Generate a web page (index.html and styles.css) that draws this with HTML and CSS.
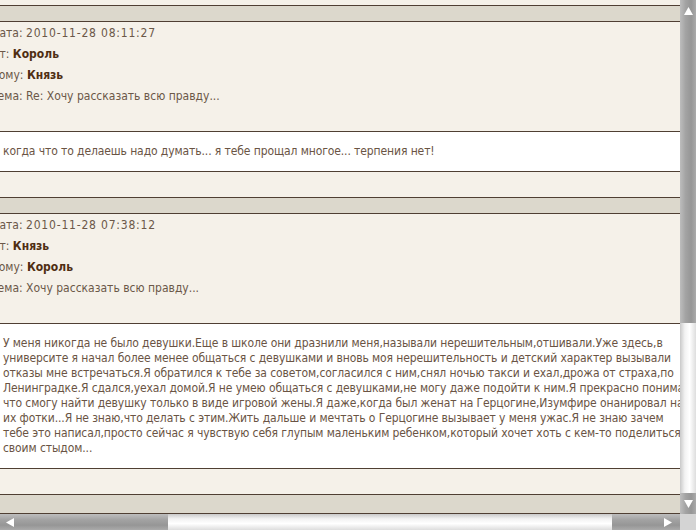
FILE: index.html
```html
<!DOCTYPE html>
<html lang="ru">
<head>
    <meta charset="UTF-8">
    <title>Личные сообщения</title>
    <link rel="stylesheet" href="styles.css">
</head>
<body>
    <div class="frame">
        <div class="viewport">
            <div class="page">
                <!-- Сообщение 1 -->
                <div class="post">
                    <div class="post-head"></div>
                    <div class="post-meta">
                        <div>Дата: <span class="date">2010-11-28 08:11:27</span></div>
                        <div>От: <b>Король</b></div>
                        <div>Кому: <b>Князь</b></div>
                        <div>Тема: Re: Хочу рассказать всю правду...</div>
                    </div>
                    <div class="post-text">когда что то делаешь надо думать... я тебе прощал многое... терпения нет!</div>
                </div>

                <!-- Сообщение 2 -->
                <div class="post">
                    <div class="post-head"></div>
                    <div class="post-meta">
                        <div>Дата: <span class="date">2010-11-28 07:38:12</span></div>
                        <div>От: <b>Князь</b></div>
                        <div>Кому: <b>Король</b></div>
                        <div>Тема: Хочу рассказать всю правду...</div>
                    </div>
                    <div class="post-text">У меня никогда не было девушки.Еще в школе они дразнили меня,называли нерешительным,отшивали.Уже здесь,в<br>университе я начал более менее общаться с девушками и вновь моя нерешительность и детский характер вызывали<br>отказы мне встречаться.Я обратился к тебе за советом,согласился с ним,снял ночью такси и ехал,дрожа от страха,по<br>Ленинградке.Я сдался,уехал домой.Я не умею общаться с девушками,не могу даже подойти к ним.Я прекрасно понимаю,<br>что смогу найти девушку только в виде игровой жены.Я даже,когда был женат на Герцогине,Изумфире онанировал на<br>их фотки...Я не знаю,что делать с этим.Жить дальше и мечтать о Герцогине вызывает у меня ужас.Я не знаю зачем<br>тебе это написал,просто сейчас я чувствую себя глупым маленьким ребенком,который хочет хоть с кем-то поделиться<br>своим стыдом...</div>
                </div>

                <div class="page-foot"></div>
            </div>
        </div>

        <!-- Полосы прокрутки -->
        <div class="vscroll">
            <div class="sb-thumb-v">
                <svg class="arrow" width="9" height="8" viewBox="0 0 9 8"><polygon points="4.5,0 9,8 0,8" fill="#fff"/></svg>
            </div>
            <div class="sb-track-v"></div>
            <div class="sb-btn-v">
                <svg class="arrow" width="9" height="8" viewBox="0 0 9 8"><polygon points="0,0 9,0 4.5,8" fill="#fff"/></svg>
            </div>
        </div>
        <div class="hscroll">
            <div class="sb-thumb-h">
                <svg class="arrow" width="8" height="9" viewBox="0 0 8 9"><polygon points="0,4.5 8,0 8,9" fill="#fff"/></svg>
            </div>
            <div class="sb-track-h"></div>
            <div class="sb-btn-h">
                <svg class="arrow" width="8" height="9" viewBox="0 0 8 9"><polygon points="0,0 8,4.5 0,9" fill="#fff"/></svg>
            </div>
        </div>
        <div class="corner"></div>
    </div>
</body>
</html>
```

FILE: styles.css
```css
/* Ramka okna */
body {
    margin: 0;
    font-family: "DejaVu Sans", sans-serif;
    font-stretch: condensed;
    color: #6b5848;
}
.frame {
    display: grid;
    grid-template-columns: 680px 16px;
    grid-template-rows: 514px 16px;
    width: 696px;
    height: 530px;
    overflow: hidden;
}
.viewport {
    overflow: hidden;
    background-color: #f5f1e9;
}
.page {
    margin-left: -20px;
    width: 780px;
    padding-top: 5px;
    background-color: #f5f1e9;
}
/* Wiadomość */
.post-head {
    height: 15px;
    background-color: #dcd8cc;
    border-top: 1px solid #4f3f33;
    border-bottom: 1px solid #4f3f33;
}
.post-meta {
    padding: 1px 0 24px 11px;
    font-size: 12px;
    line-height: 21px;
}
.post-meta .date {
    letter-spacing: 0.8px;
}
.post-meta b {
    color: #4f2e12;
}
.post-text {
    background-color: #fff;
    border-top: 1px solid #4f3f33;
    border-bottom: 1px solid #4f3f33;
    padding: 12px 0 12px 23px;
    margin-bottom: 25px;
    font-size: 12px;
    line-height: 15px;
    letter-spacing: -0.1px;
    white-space: nowrap;
    color: #6a5444;
}
.page-foot {
    height: 18px;
    background-color: #dcd8cc;
    border-top: 1px solid #4f3f33;
    border-bottom: 1px solid #4f3f33;
}
/* Paski przewijania */
.vscroll {
    display: flex;
    flex-direction: column;
}
.sb-thumb-v, .sb-btn-v {
    background: linear-gradient(to right, #bdbdbd, #a3a3a3 35%, #969696 70%, #aaaaaa);
    display: flex;
    justify-content: center;
}
.sb-thumb-v {
    height: 323px;
    padding-top: 7px;
    box-sizing: border-box;
}
.sb-track-v {
    flex: 1;
    background: linear-gradient(to right, #c9c9c9, #f2f2f2 30%, #ffffff 60%, #dddddd);
}
.sb-btn-v {
    height: 21px;
    align-items: center;
}
.hscroll {
    display: flex;
}
.sb-thumb-h, .sb-btn-h {
    background: linear-gradient(to bottom, #bdbdbd, #a3a3a3 35%, #969696 70%, #aaaaaa);
    display: flex;
    align-items: center;
}
.sb-thumb-h {
    width: 168px;
    padding-left: 6px;
    box-sizing: border-box;
}
.sb-track-h {
    flex: 1;
    background: linear-gradient(to bottom, #c9c9c9, #f2f2f2 30%, #ffffff 60%, #dddddd);
}
.sb-btn-h {
    width: 68px;
    justify-content: flex-end;
    padding-right: 8px;
    box-sizing: border-box;
}
.corner {
    background-color: #d4d4d4;
}
```
